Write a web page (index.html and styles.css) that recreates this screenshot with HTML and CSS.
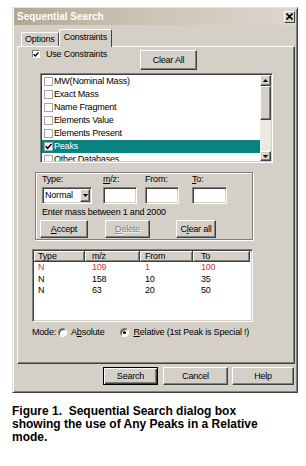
FILE: index.html
```html
<!DOCTYPE html>
<html>
<head>
<meta charset="utf-8">
<link rel="stylesheet" href="styles.css">
</head>
<body>
<div class="page">
  <div class="dialog">
    <div class="titlebar">
      <span class="title">Sequential Search</span>
      <span class="close"><svg width="7" height="7" viewBox="0 0 7 7"><path d="M0.5 0.5 L6.5 6.5 M6.5 0.5 L0.5 6.5" stroke="#000" stroke-width="1.6"/></svg></span>
    </div>
    <div class="tabs">
      <div class="tab">Options</div>
      <div class="tab active">Constraints</div>
    </div>
    <div class="panel">
      <div class="toprow">
        <div class="chk">
          <span class="cbox"><svg width="7" height="7" viewBox="0 0 7 7"><path d="M0.8 3.2 L2.7 5.2 L6.3 1.2" fill="none" stroke="#000" stroke-width="1.5"/></svg></span>
          <span>Use Constraints</span>
        </div>
        <div class="btn clearall">Clear All</div>
      </div>
      <div class="listbox sunken">
        <div class="items">
          <div class="item"><span class="lcb"></span>MW(Nominal Mass)</div>
          <div class="item"><span class="lcb"></span>Exact Mass</div>
          <div class="item"><span class="lcb"></span>Name Fragment</div>
          <div class="item"><span class="lcb"></span>Elements Value</div>
          <div class="item"><span class="lcb"></span>Elements Present</div>
          <div class="item sel"><span class="lcb"><svg width="7" height="7" viewBox="0 0 7 7"><path d="M0.6 3.2 L2.6 5.3 L6.4 1" fill="none" stroke="#000" stroke-width="1.6"/></svg></span>Peaks</div>
          <div class="item"><span class="lcb"></span>Other Databases</div>
        </div>
        <div class="scrollbar">
          <div class="sbbtn up"><svg width="5" height="3" viewBox="0 0 5 3"><path d="M2.5 0 L5 3 L0 3 Z" fill="#000"/></svg></div>
          <div class="thumb"></div>
          <div class="track"></div>
          <div class="sbbtn down"><svg width="5" height="3" viewBox="0 0 5 3"><path d="M0 0 L5 0 L2.5 3 Z" fill="#000"/></svg></div>
        </div>
      </div>
      <div class="group">
        <div class="fields">
          <span class="lbl">Type:</span>
          <span class="lbl"><u>m</u>/z:</span>
          <span class="lbl">From:</span>
          <span class="lbl"><u>T</u>o:</span>
          <div class="select sunken"><span>Normal</span><span class="dd"><svg width="5" height="3" viewBox="0 0 5 3"><path d="M0 0 L5 0 L2.5 3 Z" fill="#000"/></svg></span></div>
          <div class="input sunken"></div>
          <div class="input sunken"></div>
          <div class="input sunken wide"></div>
        </div>
        <div class="hint">Enter mass between 1 and 2000</div>
        <div class="grpbtns">
          <div class="btn accept"><span><u>A</u>ccept</span></div>
          <div class="btn delete disabled"><span><u>D</u>elete</span></div>
          <div class="btn clear2"><span>C<u>l</u>ear all</span></div>
        </div>
      </div>
      <div class="results sunken">
        <div class="hdr">
          <div class="hc">Type</div>
          <div class="hc">m/z</div>
          <div class="hc">From</div>
          <div class="hc">To</div>
        </div>
        <div class="row red"><div>N</div><div>109</div><div>1</div><div>100</div></div>
        <div class="row"><div>N</div><div>158</div><div>10</div><div>35</div></div>
        <div class="row"><div>N</div><div>63</div><div>20</div><div>50</div></div>
      </div>
      <div class="mode">
        <span>Mode:</span>
        <span class="radio r1"></span>
        <span class="rlabel">A<u>b</u>solute</span>
        <span class="radio r2 on"></span>
        <span class="rlabel"><u>R</u>elative (1st Peak is Special !)</span>
      </div>
    </div>
    <div class="footer">
      <div class="btn search">Search</div>
      <div class="btn cancel">Cancel</div>
      <div class="btn help">Help</div>
    </div>
  </div>
  <p class="caption">Figure 1.&nbsp; Sequential Search dialog box<br>showing the use of Any Peaks in a Relative<br>mode.</p>
</div>
</body>
</html>
```
FILE: styles.css
```css
* { box-sizing: border-box; }
body { margin: 0; background: #fff; font-family: "Liberation Sans", Arial, sans-serif; }
.page { padding: 7px 0 0 12px; }

.dialog {
  width: 286px; height: 386px;
  background: #d4d0c8;
  border: 1px solid; border-color: #e6e2da #404040 #404040 #e6e2da;
  box-shadow: inset 1px 1px #fff, inset -1px -1px #808080;
  display: flex; flex-direction: column;
  font-size: 9px; letter-spacing: -0.2px; color: #000; line-height: 9px;
}

.titlebar {
  height: 17px; margin: 0 1px;
  background: linear-gradient(90deg, #b1a794 0%, #cbc3b4 45%, #ddd7cc 100%);
  display: flex; align-items: center; justify-content: space-between;
  padding: 0 1px 0 3px;
}
.title { color: #fff; font-weight: bold; font-size: 10px; letter-spacing: 0; }
.close {
  width: 11px; height: 12px; background: #d4d0c8;
  border: 1px solid; border-color: #fff #404040 #404040 #fff;
  display: flex; align-items: center; justify-content: center;
}
.close svg { display: block; }

.tabs { height: 21px; display: flex; align-items: flex-end; padding-left: 8px; }
.tab {
  height: 14px; padding: 0 3px;
  border: 1px solid; border-bottom: none;
  border-color: #fff #404040 #404040 #fff;
  border-radius: 2px 2px 0 0;
  display: flex; align-items: center;
  background: #d4d0c8;
}
.tab.active {
  height: 18px; margin-bottom: -1px; padding: 0 4px 2px 4px;
  position: relative; z-index: 1;
}

.panel {
  height: 318px; margin: 0 2px 0 4px;
  border: 1px solid; border-color: #fff #404040 #404040 #fff;
  box-shadow: inset -1px -1px #808080;
  display: flex; flex-direction: column; align-items: flex-start;
}

.btn {
  display: flex; align-items: center; justify-content: center;
  height: 18px; background: #d4d0c8;
  border: 1px solid; border-color: #fff #404040 #404040 #fff;
  box-shadow: inset -1px -1px #808080;
  white-space: nowrap;
}
.sunken {
  border: 1px solid; border-color: #808080 #fff #fff #808080;
  box-shadow: inset 1px 1px #404040, inset -1px -1px #d4d0c8;
  background: #fff;
  padding: 1px;
}

.toprow { display: flex; align-items: flex-start; margin: 3px 0 0 14px; }
.chk { width: 108px; height: 8px; display: flex; align-items: center; gap: 6px; }
.cbox {
  width: 8px; height: 8px; background: #fff;
  border: 1px solid; border-color: #808080 #fff #fff #808080;
  display: flex; align-items: center; justify-content: center;
}
.cbox svg { display: block; }
.clearall { width: 57px; height: 20px; }

.listbox { margin: 3px 0 0 22px; width: 233px; height: 90px; display: flex; }
.items { flex: 1; overflow: hidden; }
.item { height: 13px; display: flex; align-items: center; padding-left: 2px; white-space: nowrap; }
.item.sel { background: #0a827f; color: #fff; }
.lcb {
  width: 9px; height: 9px; border: 1px solid #a4a4a4; background: #fff;
  margin-right: 1px; display: flex; align-items: center; justify-content: center;
}
.lcb svg { display: block; }
.scrollbar { width: 11px; display: flex; flex-direction: column; }
.sbbtn {
  height: 11px; background: #d4d0c8;
  border: 1px solid; border-color: #fff #404040 #404040 #fff;
  box-shadow: inset -1px -1px #808080;
  display: flex; align-items: center; justify-content: center;
}
.sbbtn svg { display: block; }
.sbbtn.down { height: 10px; }
.thumb {
  height: 34px; background: #d4d0c8;
  border: 1px solid; border-color: #fff #404040 #404040 #fff;
  box-shadow: inset -1px -1px #808080;
}
.track { flex: 1; background: #ece9e3; }

.group {
  margin: 9px 0 0 17px; width: 218px; height: 68px;
  border: 1px solid #808080;
  box-shadow: inset 1px 1px #fff, 1px 1px #fff;
  padding: 2px 0 0 6px;
}
.fields { display: grid; grid-template-columns: 61px 42px 47px 36px; row-gap: 3px; }
.lbl { height: 9px; }
.select {
  width: 50px; height: 17px; display: flex; align-items: center; justify-content: space-between;
  padding: 1px 1px 1px 2px;
}
.dd {
  width: 10px; height: 13px; background: #d4d0c8;
  border: 1px solid; border-color: #fff #404040 #404040 #fff;
  box-shadow: inset -1px -1px #808080;
  display: flex; align-items: center; justify-content: center;
}
.dd svg { display: block; }
.input { width: 34px; height: 17px; }
.input.wide { width: 35px; }
.hint { margin-top: 4px; height: 9px; white-space: nowrap; }
.grpbtns { display: flex; margin: 3px 0 0 -2px; }
.accept { width: 48px; }
.delete { width: 45px; margin-left: 17px; }
.clear2 { width: 40px; margin-left: 26px; }
.disabled { color: #808080; text-shadow: 1px 1px #fff; }

.results { margin: 9px 0 0 14px; width: 221px; height: 73px; }
.hdr { display: grid; grid-template-columns: 51px 55px 53px 57px; height: 11px; }
.hc {
  background: #d4d0c8;
  border-right: 1px solid #404040; border-bottom: 1px solid #404040;
  box-shadow: inset 1px 1px #fff, inset -1px -1px #808080;
  display: flex; align-items: center;
}
.row { display: grid; grid-template-columns: 51px 55px 53px 57px; height: 11.7px; line-height: 11.7px; }
.hc:nth-child(1), .row div:nth-child(1) { padding-left: 4px; }
.hc:nth-child(2), .row div:nth-child(2) { padding-left: 7px; }
.hc:nth-child(3), .row div:nth-child(3) { padding-left: 5px; }
.hc:nth-child(4), .row div:nth-child(4) { padding-left: 8px; }
.row.red { color: #e0303a; }

.mode { display: flex; align-items: center; margin: 6px 0 0 14px; height: 9px; white-space: nowrap; }
.radio {
  width: 9px; height: 9px; border-radius: 50%;
  border: 1px solid; border-color: #808080 #fff #fff #808080;
  box-shadow: inset 1px 1px #404040;
  background: #fff;
  display: flex; align-items: center; justify-content: center;
}
.r1 { margin-left: 2px; }
.r2 { margin-left: 16px; }
.radio.on::after { content: ""; width: 3px; height: 3px; border-radius: 50%; background: #000; }
.rlabel { margin-left: 4px; }

.footer { display: flex; justify-content: flex-end; margin-top: 3px; padding-right: 3px; }
.search {
  width: 55px; border: 1px solid #000;
  box-shadow: inset 1px 1px #fff, inset -1px -1px #404040, inset -2px -2px #808080;
}
.cancel { width: 65px; margin-left: 5px; }
.help { width: 62px; margin-left: 4px; }

.caption {
  margin: 12px 0 0 0;
  font-weight: bold; font-size: 12px; line-height: 13px; color: #000;
  white-space: nowrap;
}
```
